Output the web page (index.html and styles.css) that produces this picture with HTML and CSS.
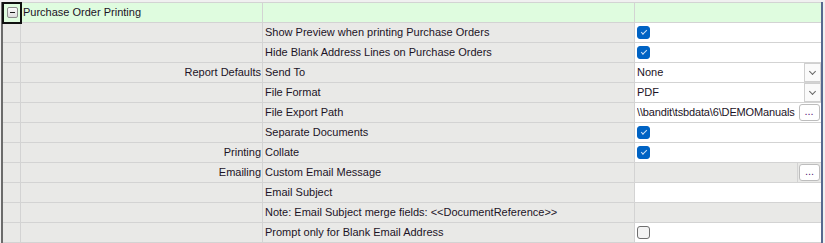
FILE: index.html
```html
<!DOCTYPE html>
<html>
<head>
    <title>Purchase Order Printing</title>
    <link rel="stylesheet" href="styles.css">
</head>
<body>
    <div class="grid">
        <!-- group header -->
        <div class="cell head expander-cell"><span class="expander"></span></div>
        <div class="cell head title">Purchase Order Printing</div>
        <div class="cell head"></div>
        <div class="cell head"></div>

        <div class="cell"></div>
        <div class="cell cat"></div>
        <div class="cell name">Show Preview when printing Purchase Orders</div>
        <div class="cell value"><span class="check on"></span></div>

        <div class="cell"></div>
        <div class="cell cat"></div>
        <div class="cell name">Hide Blank Address Lines on Purchase Orders</div>
        <div class="cell value"><span class="check on"></span></div>

        <div class="cell"></div>
        <div class="cell cat">Report Defaults</div>
        <div class="cell name">Send To</div>
        <div class="cell value combo"><span class="text">None</span><span class="drop"></span></div>

        <div class="cell"></div>
        <div class="cell cat"></div>
        <div class="cell name">File Format</div>
        <div class="cell value combo"><span class="text">PDF</span><span class="drop"></span></div>

        <div class="cell"></div>
        <div class="cell cat"></div>
        <div class="cell name">File Export Path</div>
        <div class="cell value combo"><span class="text path">\\bandit\tsbdata\6\DEMOManuals</span><span class="dots-wrap"><span class="dots">...</span></span></div>

        <div class="cell"></div>
        <div class="cell cat"></div>
        <div class="cell name">Separate Documents</div>
        <div class="cell value"><span class="check on"></span></div>

        <div class="cell"></div>
        <div class="cell cat">Printing</div>
        <div class="cell name">Collate</div>
        <div class="cell value"><span class="check on"></span></div>

        <div class="cell"></div>
        <div class="cell cat">Emailing</div>
        <div class="cell name">Custom Email Message</div>
        <div class="cell combo readonly"><span class="text"></span><span class="dots-wrap split"><span class="dots">...</span></span></div>

        <div class="cell"></div>
        <div class="cell cat"></div>
        <div class="cell name">Email Subject</div>
        <div class="cell value"></div>

        <div class="cell"></div>
        <div class="cell cat"></div>
        <div class="cell name">Note: Email Subject merge fields: &lt;&lt;DocumentReference&gt;&gt;</div>
        <div class="cell readonly"></div>

        <div class="cell"></div>
        <div class="cell cat"></div>
        <div class="cell name">Prompt only for Blank Email Address</div>
        <div class="cell value"><span class="check"></span></div>
    </div>
</body>
</html>
```

FILE: styles.css
```css
* {
    margin: 0;
    padding: 0;
    box-sizing: border-box;
}

body {
    background: #f0f0f0;
    font-family: "Liberation Sans", Arial, sans-serif;
    font-size: 11px;
    color: #1c1326;
    overflow: hidden;
}

.grid {
    display: grid;
    grid-template-columns: 17px 241px 371px 186px;
    grid-auto-rows: 19px;
    gap: 1px;
    width: 822px;
    margin: 2px 0 0 1px;
    padding: 1px 0;
    background: #d3d3d3;
    border-left: 2px solid #6b6b6b;
    border-right: 2px solid #56698f;
}

.cell {
    background: #e9e9e7;
    display: flex;
    align-items: center;
    white-space: nowrap;
    overflow: hidden;
    line-height: 19px;
}

.head {
    background: #dffcdf;
}

.expander-cell {
    position: relative;
    overflow: visible;
    justify-content: center;
}

/* focus rectangle drawn over the first header cell */
.expander-cell::after {
    content: "";
    position: absolute;
    left: -1px;
    top: -1px;
    right: -2px;
    bottom: -2px;
    border: 2px solid #101010;
}

.expander {
    position: relative;
    width: 11px;
    height: 11px;
    border: 1px solid #8c8c8c;
    border-radius: 2px;
    background: linear-gradient(#fbfbfb, #dcdcdc);
    margin-left: 1px;
}

.expander::before {
    content: "";
    position: absolute;
    left: 2px;
    right: 2px;
    top: 4px;
    height: 1px;
    background: #1a1a1a;
}

.title {
    padding-left: 2px;
}

.cat {
    justify-content: flex-end;
    padding-right: 1px;
}

.name {
    padding-left: 2px;
}

.value {
    background: #fff;
    padding-left: 2px;
}

.readonly {
    background: #e9e9e7;
}

.combo {
    padding-left: 2px;
    justify-content: space-between;
}

.combo .text {
    flex: 1;
    overflow: hidden;
}

.combo .path {
    letter-spacing: -0.15px;
}

.check {
    width: 13px;
    height: 13px;
    border-radius: 3px;
    border: 1px solid #6f6f6f;
    background: #f3f3f3;
    position: relative;
}

.check.on {
    background: #0063c4;
    border-color: #0063c4;
}

.check.on::after {
    content: "";
    position: absolute;
    left: 3px;
    top: 2px;
    width: 5px;
    height: 2px;
    border-left: 1px solid #cfe2f6;
    border-bottom: 1px solid #cfe2f6;
    transform: rotate(-45deg);
    margin-top: 1px;
}

.drop {
    width: 17px;
    height: 19px;
    border: 1px solid #cfcfcf;
    background: #fafafa;
    position: relative;
}

.drop::after {
    content: "";
    position: absolute;
    left: 5px;
    top: 5px;
    width: 4px;
    height: 4px;
    border-right: 1px solid #666;
    border-bottom: 1px solid #666;
    transform: rotate(45deg);
}

.dots-wrap {
    width: 24px;
    height: 19px;
    display: flex;
    align-items: center;
    justify-content: center;
}

.dots-wrap.split {
    border-left: 1px solid #d3d3d3;
}

.dots {
    width: 21px;
    height: 17px;
    border: 1px solid #bdbdbd;
    border-radius: 3px;
    background: #fff;
    color: #5a1a7a;
    font-size: 11px;
    line-height: 12px;
    text-align: center;
}
```
